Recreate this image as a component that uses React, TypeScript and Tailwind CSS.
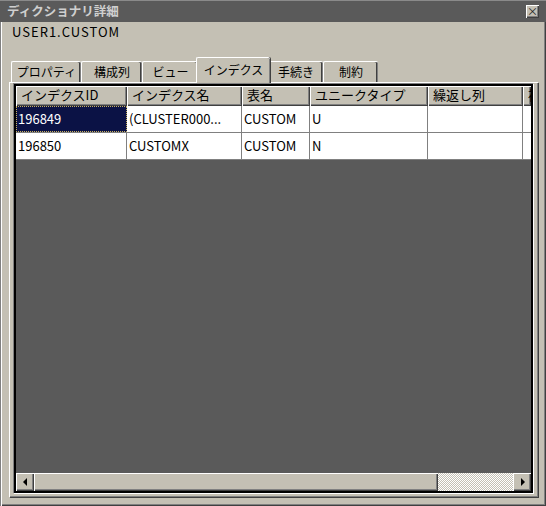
import React from "react";

const raised =
  "shadow-[inset_1px_1px_0_#ffffff,inset_-1px_-1px_0_#404040,inset_-2px_-2px_0_#808080]";

const cols = [
  { w: 111, label: "インデクスID" },
  { w: 115, label: "インデクス名" },
  { w: 68, label: "表名" },
  { w: 118, label: "ユニークタイプ" },
  { w: 95, label: "繰返し列" },
  { w: 8, label: "補" },
];

const rows = [
  ["196849", "(CLUSTER000...", "CUSTOM", "U", "", ""],
  ["196850", "CUSTOMX", "CUSTOM", "N", "", ""],
];

function Tab({ label, w, selected }: { label: string; w: number; selected?: boolean }) {
  if (selected) {
    return (
      <div
        className="relative z-10 -mx-[2px] mb-[-1px] h-[26px] flex items-start justify-center pt-[4px] bg-[#c4c0b4] border-t border-l border-white rounded-tl-[2px] rounded-tr-[2px] shadow-[inset_-1px_0_0_#808080,1px_0_0_#404040]"
        style={{ width: w + 4 }}
      >
        <span>{label}</span>
      </div>
    );
  }
  return (
    <div
      className="h-[21px] flex items-start justify-center pt-[2px] bg-[#c4c0b4] border-t border-l border-white rounded-tl-[2px] rounded-tr-[2px] shadow-[inset_-1px_0_0_#808080,inset_-2px_0_0_#404040]"
      style={{ width: w }}
    >
      <span>{label}</span>
    </div>
  );
}

export default function App() {
  return (
    <div
      className="w-[546px] h-[506px] bg-[#c4c0b4] flex flex-col overflow-hidden text-[13px] leading-[16px] text-black shadow-[inset_1px_0_0_#808080,inset_2px_0_0_#ffffff,inset_-1px_-1px_0_#404040,inset_-2px_-2px_0_#808080]"
      style={{ fontFamily: '"Noto Sans CJK JP", "Liberation Sans", sans-serif' }}
    >
      {/* Title bar */}
      <div className="h-[22px] bg-[#5a5a5a] border-t border-[#8a8a8a] flex items-center justify-between pl-[7px] pr-[7px]">
        <span className="font-bold text-[#cfcfcf] text-[12.5px] leading-[16px] -mt-[1px]">ディクショナリ詳細</span>
        <div
          className={`w-[13px] h-[13px] bg-[#c4c0b4] flex items-center justify-center text-[11px] leading-none text-[#202020] ${raised}`}
        >
          <span className="-mt-[1px]">×</span>
        </div>
      </div>

      {/* Owner */}
      <div className="pl-[12px] mt-[3px] tracking-[1px] leading-[14px]">USER1.CUSTOM</div>

      {/* Tabs */}
      <div className="mt-[19px] pl-[11px] flex items-end h-[24px] text-[12px]">
        <Tab label="プロパティ" w={70} />
        <Tab label="構成列" w={61} />
        <Tab label="ビュー" w={56} />
        <Tab label="インデクス" w={70} selected />
        <Tab label="手続き" w={55} />
        <Tab label="制約" w={55} />
      </div>

      {/* Panel */}
      <div className="ml-[9px] w-[529px] h-[415px] border-t border-l border-white shadow-[inset_-1px_-1px_0_#808080,1px_1px_0_#404040] pl-[3px]">
        {/* List */}
        <div className="w-[520px] h-[410px] border-l border-t border-[#808080] shadow-[1px_1px_0_#ffffff]">
          <div className="w-[519px] h-[409px] border-2 border-black bg-[#5a5a5a] flex flex-col overflow-hidden">
            {/* Header */}
            <div className="flex h-[20px] bg-[#c4c0b4] overflow-hidden shrink-0">
              {cols.map((c, i) => (
                <div
                  key={i}
                  className={`shrink-0 h-[20px] pl-[5px] pt-[1px] whitespace-nowrap overflow-hidden ${raised}`}
                  style={{ width: c.w }}
                >
                  {c.label}
                </div>
              ))}
            </div>
            {/* Rows */}
            {rows.map((r, ri) => (
              <div key={ri} className="flex h-[27px] bg-white border-b border-[#808080] overflow-hidden shrink-0">
                {cols.map((c, ci) => {
                  const sel = ri === 0 && ci === 0;
                  return (
                    <div
                      key={ci}
                      className={`shrink-0 h-[26px] flex items-center whitespace-nowrap overflow-hidden ${
                        ci < cols.length - 1 ? "border-r border-[#808080]" : ""
                      } ${sel ? "bg-[#0b1245] text-white border border-dotted border-[#c8b060] pl-[1px]" : "pl-[2px]"}`}
                      style={{ width: c.w }}
                    >
                      {r[ci]}
                    </div>
                  );
                })}
              </div>
            ))}
            <div className="flex-1" />
            {/* Scrollbar */}
            <div className="h-[18px] flex shrink-0 bg-[#c4c0b4]">
              <div className={`w-[18px] h-[18px] flex items-center justify-center ${raised}`}>
                <svg width="5" height="8" viewBox="0 0 5 8">
                  <path d="M4 0 L0 4 L4 8 Z" fill="#000" />
                </svg>
              </div>
              <div className={`w-[404px] h-[18px] ${raised}`} />
              <div className="flex-1 h-[18px] bg-[repeating-conic-gradient(#ffffff_0_25%,#c4c0b4_0_50%)] bg-[length:2px_2px]" />
              <div className={`w-[18px] h-[18px] flex items-center justify-center ${raised}`}>
                <svg width="5" height="8" viewBox="0 0 5 8">
                  <path d="M1 0 L5 4 L1 8 Z" fill="#000" />
                </svg>
              </div>
            </div>
          </div>
        </div>
      </div>
    </div>
  );
}
